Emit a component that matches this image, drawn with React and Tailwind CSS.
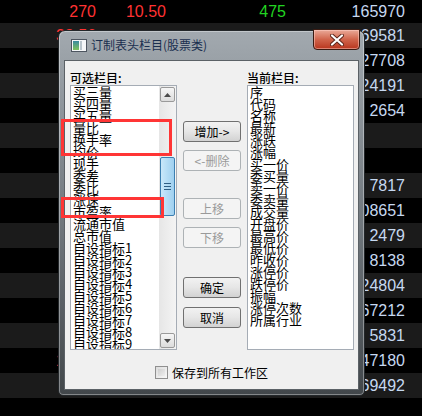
import React from 'react';

const rows = [
  { a: '270', b: '10.50', c: '475', d: '165970' },
  { a: '32.56', d: '169581' },
  { d: '127708' },
  { d: '124191' },
  { d: '2654' },
  {},
  {},
  { d: '7817' },
  { d: '108651' },
  { d: '2479' },
  { d: '8138' },
  { d: '124804' },
  { d: '167212' },
  { d: '5831' },
  { a: '18.40', d: '147180' },
  { d: '169492' },
  {},
];

const leftItems = [
  '买三量', '买四量', '买五量', '量比', '换手率', '均价', '现手', '委差', '委比', '涨速', '市盈率',
  '流通市值', '总市值', '自设指标1', '自设指标2', '自设指标3', '自设指标4', '自设指标5',
  '自设指标6', '自设指标7', '自设指标8', '自设指标9',
];

const rightItems = [
  '序', '代码', '名称', '最新', '涨跌', '涨幅', '买一价', '委买量', '卖一价', '委卖量', '成交量',
  '开盘价', '最高价', '最低价', '昨收价', '涨停价', '跌停价', '振幅', '涨停次数', '所属行业',
];

const cjk = { fontFamily: '"Noto Sans CJK SC", "Noto Sans", sans-serif' };

const Btn = ({ label, disabled, className = '' }) => (
  <div
    className={
      'h-[21px] w-[58px] rounded-[3px] border flex items-center justify-center text-[12px] leading-none ' +
      (disabled
        ? 'border-[#adb2b5] bg-[#f4f4f4] text-[#9a9a9a] '
        : 'border-[#707070] bg-linear-to-b from-[#f2f2f2] via-[#e6e6e6] to-[#d2d2d2] text-black ') +
      className
    }
  >
    {label}
  </div>
);

const Arrow = ({ down }) => (
  <div className="h-[15px] w-[15px] mx-auto rounded-[2px] border border-[#9a9a9a] bg-linear-to-b from-[#f6f6f6] to-[#dcdcdc] flex items-center justify-center">
    <svg width="7" height="4" viewBox="0 0 7 4">
      <path d={down ? 'M0 0 L7 0 L3.5 4 Z' : 'M0 4 L7 4 L3.5 0 Z'} fill="#4a4a4a" />
    </svg>
  </div>
);

// list rows are 12px apart while glyphs are 13px, so they touch like the original
const ListBox = ({ items, scroll }) => (
  <div className="h-[265px] w-[107px] border border-[#a5acb5] bg-white flex">
    <div className="flex-1 overflow-hidden pl-[2px] text-[13px] leading-[12px] text-black whitespace-nowrap">
      {items.map((t) => (
        <div key={t} className="h-[12px]">{t}</div>
      ))}
    </div>
    {scroll && (
      <div className="w-[17px] bg-linear-to-r from-[#e6e6e6] to-[#f4f4f4] flex flex-col">
        <div className="mt-px">
          <Arrow />
        </div>
        <div className="mt-[55px] h-[59px] w-[15px] mx-auto rounded-[2px] border border-[#3c7fb1] bg-linear-to-r from-[#c9e8fa] via-[#b3dcf5] to-[#9fd0f0] flex flex-col items-center justify-center gap-[2px]">
          <div className="h-px w-[7px] bg-[#2f5f85]" />
          <div className="h-px w-[7px] bg-[#2f5f85]" />
          <div className="h-px w-[7px] bg-[#2f5f85]" />
        </div>
        <div className="mt-auto mb-px">
          <Arrow down />
        </div>
      </div>
    )}
  </div>
);

export default function App() {
  return (
    <div className="relative w-[422px] h-[416px] overflow-hidden bg-black" style={{ fontFamily: '"Liberation Sans", Arial, sans-serif' }}>
      <div className="flex flex-col">
        {rows.map((r, i) => (
          <div
            key={i}
            className={
              'flex items-center text-[16px] ' +
              (i === 0 ? 'h-[23px] ' : 'h-[25px] ') +
              (i % 2 === 1 ? 'bg-[#1b1b1b]' : 'bg-black')
            }
          >
            <span className="w-[96px] text-right text-[#ff3232]">{r.a}</span>
            <span className="w-[70px] text-right text-[#ff3232]">{r.b}</span>
            <span className="w-[120px] text-right text-[#22d422]">{r.c}</span>
            <span className="w-[119px] text-right text-[#c6d8f0]">{r.d}</span>
          </div>
        ))}
      </div>

      {/* dialog window */}
      <div
        className="absolute left-[58px] top-[30px] w-[307px] h-[366px] rounded-t-[7px] rounded-b-[5px] border border-[#23272a] bg-linear-to-b from-[#a2a9af] via-[#737a80] to-[#42474b] px-[5px] pb-[5px] flex flex-col shadow-[inset_0_0_0_1px_rgba(255,255,255,0.35)]"
        style={cjk}
      >
        <div className="h-[29px] flex items-center pl-[7px] gap-[4px] pb-[1px]">
          <svg width="16" height="13" viewBox="0 0 16 13">
            <defs>
              <linearGradient id="ig" x1="0" y1="0" x2="0" y2="1">
                <stop offset="0" stopColor="#3b8aa0" />
                <stop offset="1" stopColor="#7fc25a" />
              </linearGradient>
            </defs>
            <rect x="0.5" y="0.5" width="15" height="12" fill="#f4f6f8" stroke="#4d5560" />
            <rect x="2" y="2" width="6" height="9" fill="url(#ig)" />
            <rect x="9" y="2" width="2" height="9" fill="#b8c4cc" />
          </svg>
          <span className="text-[12px] leading-none text-[#1a2f4f]">订制表头栏目(股票类)</span>
        </div>

        {/* close button */}
        <div className="absolute left-[254px] top-[-2px] w-[47px] h-[21px] rounded-b-[4px] border border-[#3a1b12] bg-linear-to-b from-[#e9a998] via-[#d0644b] to-[#b8341c] flex items-center justify-center shadow-[inset_0_0_0_1px_rgba(255,210,200,0.5)]">
          <svg width="14" height="12" viewBox="0 0 14 12">
            <path d="M2 1.5 L12 10.5 M12 1.5 L2 10.5" stroke="#5a2318" strokeWidth="4" strokeLinecap="round" />
            <path d="M2 1.5 L12 10.5 M12 1.5 L2 10.5" stroke="#ffffff" strokeWidth="2.2" strokeLinecap="round" />
          </svg>
        </div>

        {/* client area */}
        <div className="flex-1 border border-[#5b6166] bg-[#f0f0f0] pl-[5px] pt-[10px] flex flex-col">
          <div className="flex gap-[6px]">
            <div className="flex flex-col">
              <div className="h-[14px] text-[12px] leading-[14px] font-medium text-black">可选栏目:</div>
              <ListBox items={leftItems} scroll />
            </div>
            <div className="flex flex-col w-[58px]">
              <Btn label="增加->" className="mt-[50px]" />
              <Btn label="<-删除" disabled className="mt-[8px]" />
              <Btn label="上移" disabled className="mt-[27px]" />
              <Btn label="下移" disabled className="mt-[8px]" />
              <Btn label="确定" className="mt-[29px]" />
              <Btn label="取消" className="mt-[9px]" />
            </div>
            <div className="flex flex-col">
              <div className="h-[14px] text-[12px] leading-[14px] font-medium text-black">当前栏目:</div>
              <ListBox items={rightItems} />
            </div>
          </div>
          <div className="mt-[16px] flex items-center justify-center gap-[4px] pr-[5px]">
            <div className="h-[13px] w-[13px] border border-[#8f8f8f] bg-linear-to-br from-[#dcdcdc] to-[#f8f8f8] p-[2px]">
              <div className="h-full w-full bg-linear-to-br from-[#cfcfcf] to-[#eeeeee]" />
            </div>
            <span className="text-[12px] leading-none text-black">保存到所有工作区</span>
          </div>
        </div>
      </div>

      {/* annotation boxes */}
      <div className="absolute left-[61px] top-[119px] w-[111px] h-[37px] border-[3px] border-[#ff3535]" />
      <div className="absolute left-[61px] top-[197px] w-[103px] h-[21px] border-[3px] border-[#ff3535]" />
    </div>
  );
}
